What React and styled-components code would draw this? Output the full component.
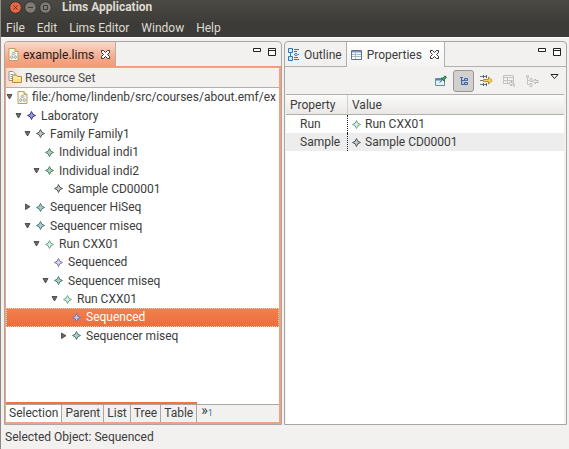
import React from "react";
import styled, { createGlobalStyle, css } from "styled-components";

const Global = createGlobalStyle`
  * { box-sizing: border-box; }
  body { margin: 0; background: #f2f1f0; }
  button { font: inherit; color: inherit; background: none; border: 0; padding: 0; margin: 0; }
  svg { display: block; flex: none; }
`;

const Page = styled.div`
  min-height: 100vh;
  display: flex;
  flex-direction: column;
  border-left: 1px solid #8d8983;
  background: #f2f1f0;
  color: #3c3c3c;
  font: 12px/18px Roboto, "Open Sans", sans-serif;
  white-space: nowrap;
`;

const Chrome = styled.header`
  background: linear-gradient(#4a4943, #3c3b37 24px);
  color: #dfdbd2;
  height: 37px;
`;

const TitleBar = styled.div`
  display: flex;
  align-items: center;
  height: 15px;
  padding-left: 8px;
  gap: 2px;
`;

const WindowButton = styled.button`
  width: 13px;
  height: 13px;
`;

const Title = styled.h1`
  margin: 0 0 0 8px;
  font-size: 12px;
  line-height: 15px;
  font-weight: 700;
`;

const MenuBar = styled.nav`
  display: flex;
  gap: 12px;
  height: 22px;
  padding: 4px 5px 0;
`;

const MenuButton = styled.button`
  line-height: 18px;
`;

const Workbench = styled.main`
  flex: 1;
  display: grid;
  grid-template-columns: minmax(0, 278fr) minmax(0, 283fr);
  gap: 2px;
  padding: 3px 2px 0 3px;
  border-top: 1px solid #fff;
`;

const Panel = styled.section`
  display: flex;
  flex-direction: column;
  min-width: 0;
  border: 1px solid #aaa6a1;
  border-radius: 4px 4px 0 0;
  overflow: hidden;
`;

const TabBar = styled.div`
  display: flex;
  height: 25px;
  flex: none;
  border-bottom: 1px solid ${(p) => (p.$active ? "#f39a78" : "#b3afaa")};
`;

const ViewTab = styled.button`
  display: flex;
  align-items: center;
  gap: 4px;
  height: 25px;
  padding: 0 4px 0 3px;
  ${(p) =>
    p.$tone === "active" &&
    css`
      padding: 0 5px 0 3px;
      color: #1c1c1c;
      border-right: 1px solid #b3afaa;
      background: linear-gradient(#fbd8ca, #f5a585 70%, #f39a78);
    `}
  ${(p) =>
    p.$tone === "front" &&
    css`
      gap: 5px;
      padding: 0 5px 0 4px;
      border: solid #b3afaa;
      border-width: 0 1px;
      background: linear-gradient(#ffffff, #f4f3f2);
    `}
`;

const TabName = styled.span`
  padding-right: 3px;
`;

const PanelButtons = styled.div`
  display: flex;
  gap: 6px;
  margin-left: auto;
  padding: 6px 4px 0 0;
`;

const PanelButton = styled.button`
  width: 9px;
  height: 9px;
`;

const ActiveBody = styled.div`
  flex: 1;
  display: flex;
  flex-direction: column;
  border: solid #f5a07e;
  border-width: 1px 2px 2px 1px;
  background: #fff;
`;

const TreeHeader = styled.div`
  display: flex;
  align-items: center;
  gap: 3px;
  height: 20px;
  padding: 0 2px;
  background: linear-gradient(90deg, #f9d5c7, #f2f1f0 16px);
  border-bottom: 1px solid #b3afaa;
  color: #4c4c4c;
`;

const Tree = styled.ul`
  list-style: none;
  margin: 0;
  padding: 0;
  height: 257px;
  display: grid;
  grid-auto-rows: 1fr;
`;

const TreeRow = styled.li`
  display: flex;
  align-items: center;
  min-height: 0;
  overflow: hidden;
  padding-left: ${(p) => p.$level * 9}px;
  ${(p) =>
    p.$selected &&
    css`
      background: linear-gradient(#f37f4e, #ec6e3c);
      color: #fff;
      outline: 1px dotted #fbd0bd;
      outline-offset: -1px;
    `}
`;

const Toggle = styled.button`
  width: 9px;
  height: 12px;
  flex: none;
`;

const IconSlot = styled.span`
  width: 15px;
  flex: none;
  display: flex;
  justify-content: center;
  margin-right: 2px;
`;

const PageTabs = styled.div`
  display: flex;
  height: 18px;
  background: #f2f1f0;
  border-top: 1px solid #aaa6a1;
`;

const AccentLine = styled.div`
  width: 70%;
  height: 2px;
  margin-top: auto;
  background: #ef7443;
`;

const PageTab = styled.button`
  padding: 0 3px;
  line-height: 17px;
  border-right: 1px solid #aaa6a1;
  background: ${(p) => (p.$current ? "#fff" : "transparent")};
`;

const MoreTabs = styled.button`
  display: flex;
  padding-left: 4px;
  font-size: 14px;
  line-height: 10px;

  sub {
    font-size: 9px;
    line-height: 17px;
    color: #3877b5;
  }
`;

const ToolBar = styled.div`
  display: flex;
  justify-content: flex-end;
  align-items: center;
  height: 27px;
  gap: 2px;
  padding-right: 2px;
`;

const ToolButton = styled.button`
  display: flex;
  align-items: center;
  justify-content: center;
  width: 21px;
  height: 22px;
  border: 1px solid ${(p) => (p.$pressed ? "#9a9793" : "transparent")};
  border-radius: 3px;
  background: ${(p) => (p.$pressed ? "#d2d0ce" : "transparent")};
`;

const ViewMenu = styled.button`
  width: 19px;
  height: 20px;
  display: flex;
  justify-content: center;
  padding-top: 3px;
`;

const TableArea = styled.div`
  flex: 1;
  margin: 0 2px 0 1px;
  background: #fff;
  border-top: 1px solid #b3afaa;
`;

const Table = styled.table`
  width: 100%;
  border-collapse: separate;
  border-spacing: 0;
  table-layout: fixed;

  th, td {
    height: 18px;
    padding: 0 0 0 4px;
    text-align: left;
    font-weight: 400;
    line-height: 18px;
  }
  th {
    height: 20px;
    background: linear-gradient(#fbfbfa, #e9e8e6);
    border-bottom: 1px solid #b3afaa;
  }
  th:first-child { width: 62px; border-right: 1px solid #d2d0cd; }
  td:first-child { padding-left: 14px; border-right: 1px dotted #222; }
  tr:nth-child(2) td { background: #ededed; }
`;

const ValueCell = styled.span`
  display: flex;
  align-items: center;
  gap: 4px;
`;

const Status = styled.footer`
  height: 24px;
  padding: 3px 4px;
`;

const Star = ({ color, fill = "#bcc6c2" }) => (
  <svg width="9" height="9" viewBox="0 0 9 9" aria-hidden="true">
    <path d="M4.5 0.5 5.8 3.2 8.5 4.5 5.8 5.8 4.5 8.5 3.2 5.8 0.5 4.5 3.2 3.2Z" fill={fill} stroke={color} strokeLinejoin="round" />
  </svg>
);

const CloseIcon = () => (
  <svg width="9" height="9" viewBox="0 0 9 9" aria-hidden="true">
    <path d="M.5.5h2L4.5 2.5l2-2h2v2l-2 2 2 2v2h-2l-2-2-2 2h-2v-2l2-2-2-2z" fill="#fff" stroke="#343434" />
  </svg>
);

const MinMax = () => (
  <PanelButtons>
    <PanelButton aria-label="Minimize">
      <svg width="9" height="9"><path d="M.5.5h7v3h-7z" fill="#fff" stroke="#222" /></svg>
    </PanelButton>
    <PanelButton aria-label="Maximize">
      <svg width="9" height="9"><path d="M.5.5h7v7h-7zM.5 2.5h7" fill="#fff" stroke="#222" /></svg>
    </PanelButton>
  </PanelButtons>
);

const FileIcon = () => (
  <svg width="11" height="13" viewBox="0 0 11 13" aria-hidden="true">
    <path d="M1 .5h6l3 3v9H1z" fill="#faf8e8" stroke="#b5a263" />
    <path d="M7 .5v3h3" fill="#e4d391" stroke="#b5a263" />
    <path d="M5.5 3.8 7 5.5 5.5 7.2 4 5.5zM3.7 7.5 5.2 9.2 3.7 10.9 2.2 9.2zM7.3 7.5l1.5 1.7-1.5 1.7-1.5-1.7z" fill="#d5dcdd" stroke="#8a979c" strokeWidth=".7" />
  </svg>
);

const FolderIcon = () => (
  <svg width="14" height="13" viewBox="0 0 14 13" aria-hidden="true">
    <path d="M1 .5h4l2 2v7H1z" fill="#fff" stroke="#9c9483" />
    <path d="M2.5 3.5h3M2.5 5.5h2M2.5 7.5h2" stroke="#7694bd" />
    <path d="M4.5 11.5v-6l1-1.5h3l1 1.5h4v6z" fill="#fbe08c" stroke="#c18a35" />
    <path d="M5.5 7h7" stroke="#fff4c4" />
  </svg>
);

const OutlineIcon = () => (
  <svg width="12" height="13" viewBox="0 0 12 13" aria-hidden="true">
    <path d="M.5.5h4v4h-4zM.5 8.5h4v4h-4z" fill="#d8ebf8" stroke="#2e7ab8" />
    <path d="M2.5 4.5v4M6 1.5h5M6 3.5h3M6 6.5h1M10 6.5h1M6 9.5h4M6 11.5h5" stroke="#2e7ab8" />
    <circle cx="8" cy="6.5" r="1.2" fill="#fff" stroke="#2e7ab8" />
  </svg>
);

const PropertiesIcon = () => (
  <svg width="11" height="10" viewBox="0 0 11 10" aria-hidden="true">
    <path d="M.5.5h10v9H.5z" fill="#fff" stroke="#61738a" />
    <path d="M1 1h9v1.5H1z" fill="#7996c4" />
    <path d="M4.5 2v7M1 4.5h9M1 6.5h9" stroke="#a9b8c9" />
  </svg>
);

const PinIcon = () => (
  <svg width="12" height="12" viewBox="0 0 12 12" aria-hidden="true">
    <path d="M.5 3.5h9v7h-9z" fill="#e2f1fa" stroke="#72889c" />
    <path d="M1 4h6v1.5H1z" fill="#3e86c6" />
    <path d="m4.5 7.5 3-2.5" stroke="#555" />
    <path d="m6 3 2 .2L10 .8l1.5 1.5L9.2 4.5l.3 2z" fill="#3fa45b" stroke="#217a40" />
  </svg>
);

const HierarchyIcon = () => (
  <svg width="10" height="11" viewBox="0 0 10 11" aria-hidden="true">
    <path d="M1 2.5h3M2.5 2v7.5h3M2.5 5.5h3M5.5 3.5h3v2h-3zM5.5 7.5h3v2h-3z" fill="#a9bce0" stroke="#3f65ad" />
  </svg>
);

const AdvancedIcon = () => (
  <svg width="13" height="13" viewBox="0 0 13 13" aria-hidden="true">
    <path d="M0 2.5h7M0 6.5h4M0 10.5h7" stroke="#6a7f92" />
    <path d="M3.5 1v3M3.5 9v3M6.5 1v3M6.5 9v3" stroke="#46637d" />
    <path d="M3.5 5.5h5V3l3.7 3.5L8.5 10V7.5h-5z" fill="#fbd568" stroke="#c58a22" />
  </svg>
);

const RestoreIcon = () => (
  <svg width="13" height="12" viewBox="0 0 13 12" aria-hidden="true">
    <path d="M.5.5h10v8H.5zM.5 2.5h10M4.5 2.5v6M.5 5.5h10" fill="none" stroke="#c5c3c1" />
    <path d="M6 8.5 8.5 6v1.5c3 0 3 2 2.5 4-.5-2-1.5-2-2.5-2V11z" fill="#e9e8e7" stroke="#b8b6b4" />
  </svg>
);

const DefaultsIcon = () => (
  <svg width="13" height="12" viewBox="0 0 13 12" aria-hidden="true">
    <path d="M.5.5h2v2h-2zM1.5 3v6.5h2M1.5 5.5h2M4 3.5h2v3H4zM4 8.5h2v3H4z" fill="none" stroke="#c5c3c1" />
    <path d="M7 6.5 9.5 4v1.5H12v2H9.5V9z" fill="#eee" stroke="#b8b6b4" />
  </svg>
);

const TriangleIcon = ({ open }) => (
  <svg width="7" height="12" viewBox="0 0 7 12" aria-hidden="true">
    <path d={open ? "M1 3.5h5L3.5 8z" : "M1.5 3v5.5L6 5.7z"} fill="#6b6965" stroke="#3c3b37" strokeWidth=".8" />
  </svg>
);

const CONTROLS = [
  { label: "Close window", fill: "#ed6541", mark: "M4.5 4.5l4 4m0-4-4 4" },
  { label: "Minimize window", fill: "#7d7b73", mark: "M4 6.5h5" },
  { label: "Maximize window", fill: "#7d7b73", mark: "M4.5 4.5h4v4h-4z" },
];

const TEAL = "#43807d";
const GREEN = "#3f8765";
const MINT = "#68a88a";
const GRAY = "#58595b";
const VIOLET = "#7775b5";

const NODES = [
  { level: 0, label: "file:/home/lindenb/src/courses/about.emf/ex", open: true },
  { level: 1, label: "Laboratory", color: "#37378b", fill: "#9a9ad8", open: true },
  { level: 2, label: "Family Family1", color: GRAY, open: true },
  { level: 3, label: "Individual indi1", color: GREEN },
  { level: 3, label: "Individual indi2", color: GREEN, open: true },
  { level: 4, label: "Sample CD00001", color: GRAY },
  { level: 2, label: "Sequencer HiSeq", color: TEAL, open: false },
  { level: 2, label: "Sequencer miseq", color: TEAL, open: true },
  { level: 3, label: "Run CXX01", color: MINT, fill: "#dcefe4", open: true },
  { level: 4, label: "Sequenced", color: VIOLET, fill: "#d6d5ee" },
  { level: 4, label: "Sequencer miseq", color: TEAL, open: true },
  { level: 5, label: "Run CXX01", color: MINT, fill: "#dcefe4", open: true },
  { level: 6, label: "Sequenced", color: VIOLET, fill: "#b4cbe6", selected: true },
  { level: 6, label: "Sequencer miseq", color: TEAL, open: false },
];

export default function App() {
  return (
    <Page>
      <Global />
      <Chrome>
        <TitleBar>
          {CONTROLS.map((c) => (
            <WindowButton key={c.label} aria-label={c.label}>
              <svg width="13" height="13">
                <circle cx="6.5" cy="6.5" r="5.8" fill={c.fill} stroke="#343330" />
                <path d={c.mark} fill="none" stroke="#3c3b37" />
              </svg>
            </WindowButton>
          ))}
          <Title>Lims Application</Title>
        </TitleBar>
        <MenuBar>
          {["File", "Edit", "Lims Editor", "Window", "Help"].map((m) => (
            <MenuButton key={m}>{m}</MenuButton>
          ))}
        </MenuBar>
      </Chrome>
      <Workbench>
        <Panel>
          <TabBar $active>
            <ViewTab $tone="active"><FileIcon /><TabName>example.lims</TabName><CloseIcon /></ViewTab>
            <MinMax />
          </TabBar>
          <ActiveBody>
            <TreeHeader><FolderIcon />Resource Set</TreeHeader>
            <Tree role="tree">
              {NODES.map((n, i) => (
                <TreeRow key={i} role="treeitem" aria-level={n.level + 1} aria-selected={!!n.selected} $level={n.level} $selected={n.selected}>
                  <Toggle as={n.open === undefined ? "span" : "button"} aria-label={n.open === undefined ? undefined : "Toggle " + n.label}>
                    {n.open !== undefined && <TriangleIcon open={n.open} />}
                  </Toggle>
                  <IconSlot>{n.level === 0 ? <FileIcon /> : <Star color={n.color} fill={n.fill} />}</IconSlot>
                  {n.label}
                </TreeRow>
              ))}
            </Tree>
            <AccentLine />
            <PageTabs>
              {["Selection", "Parent", "List", "Tree", "Table"].map((t, i) => (
                <PageTab key={t} $current={i === 0}>{t}</PageTab>
              ))}
              <MoreTabs aria-label="More pages">»<sub>1</sub></MoreTabs>
            </PageTabs>
          </ActiveBody>
        </Panel>
        <Panel>
          <TabBar>
            <ViewTab><OutlineIcon />Outline</ViewTab>
            <ViewTab $tone="front"><PropertiesIcon /><TabName>Properties</TabName><CloseIcon /></ViewTab>
            <MinMax />
          </TabBar>
          <ToolBar>
            <ToolButton aria-label="Pin"><PinIcon /></ToolButton>
            <ToolButton aria-label="Show categories" $pressed><HierarchyIcon /></ToolButton>
            <ToolButton aria-label="Show advanced properties"><AdvancedIcon /></ToolButton>
            <ToolButton aria-label="Restore default value" disabled><RestoreIcon /></ToolButton>
            <ToolButton aria-label="Locate value" disabled><DefaultsIcon /></ToolButton>
            <ViewMenu aria-label="View menu">
              <svg width="9" height="6"><path d="M1 .5h7L4.5 4.5z" fill="#fff" stroke="#222" /></svg>
            </ViewMenu>
          </ToolBar>
          <TableArea>
            <Table>
              <thead><tr><th>Property</th><th>Value</th></tr></thead>
              <tbody>
                <tr><td>Run</td><td><ValueCell><Star color={MINT} fill="#dcefe4" />Run CXX01</ValueCell></td></tr>
                <tr><td>Sample</td><td><ValueCell><Star color={GRAY} />Sample CD00001</ValueCell></td></tr>
              </tbody>
            </Table>
          </TableArea>
        </Panel>
      </Workbench>
      <Status>Selected Object: Sequenced</Status>
    </Page>
  );
}
